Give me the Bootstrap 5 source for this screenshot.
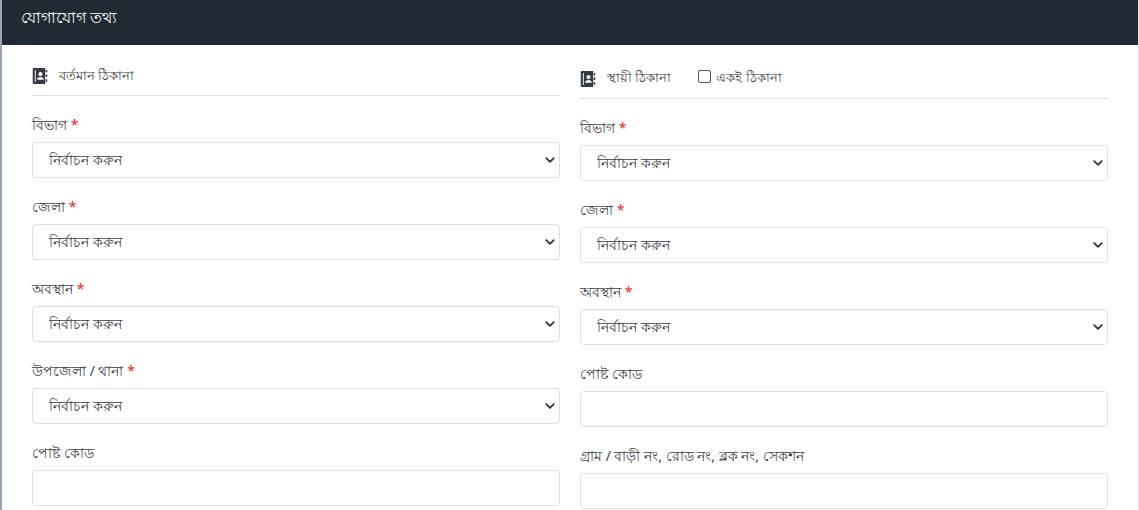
<!DOCTYPE html>
<html lang="bn">
<head>
  <meta charset="UTF-8">
  <title>যোগাযোগ তথ্য</title>
  <meta name="viewport" content="width=device-width, initial-scale=1">
  <link href="https://cdn.jsdelivr.net/npm/bootstrap@5.3.0/dist/css/bootstrap.min.css" rel="stylesheet">
  <script src="https://cdn.jsdelivr.net/npm/bootstrap@5.3.0/dist/js/bootstrap.bundle.min.js"></script>
  <style>
    html, body { height: 510px; overflow: hidden; }
    body { font-family: "Noto Sans", "Liberation Sans", sans-serif; font-size: 14px; color: #3c4043; background: #fff; }
    .info-card { border: 0; border-left: 2px solid #9aa5b1; border-right: 1px solid #dee2e6; border-radius: 0; }
    .info-head { background: #212934; color: #fff; height: 45px; padding: 6px 19px 0; font-size: 15.7px; line-height: 22px; }
    .info-body { padding: 0 29px 0 30px; }
    .info-row { display: grid; grid-template-columns: 528px 528px; column-gap: 20px; }
    .sec-title { height: 51px; padding-top: 20px; border-bottom: 1px solid #dee2e6; margin-bottom: 18px; font-size: 13px; line-height: 20px; }
    .sec-title-r { margin-top: 3px; }
    .sec-title-r > span { margin-top: -1px; }
    .sec-title svg { width: 16px; height: 16px; margin: 3px 11px 0 0; flex: none; }
    .same-addr { margin-left: 27px; }
    .same-addr .form-check-input { width: 13px; height: 13px; margin: 0 5px 2px 0; border-color: #555; border-radius: 2px; }
    .fld { margin-bottom: 18px; }
    .fld label { display: block; font-size: 14px; line-height: 20px; padding-top: 1px; margin-bottom: 7px; }
    .req { color: #f01c24; }
    .fld .form-select, .fld .form-control { height: 36px; font-size: 14px; line-height: 20px; padding: 6px 16px; color: #3c4043; border-color: #dcdfe2; border-radius: 4px; }
    .fld .form-select { background-image: url("data:image/svg+xml,%3csvg xmlns='http://www.w3.org/2000/svg' viewBox='0 0 16 16'%3e%3cpath fill='none' stroke='%23343a40' stroke-linecap='round' stroke-linejoin='round' stroke-width='3' d='m2 5 6 6 6-6'/%3e%3c/svg%3e"); background-size: 10px 10px; background-position: right 4px center; }
  </style>
</head>
<body>

<div class="card info-card">
  <div class="info-head">যোগাযোগ তথ্য</div>
  <div class="info-body">
    <div class="info-row">

      <div>
        <div class="sec-title d-flex align-items-start">
          <svg viewBox="0 0 16 17"><use href="#book"/></svg>
          <span>বর্তমান ঠিকানা</span>
        </div>
        <div class="fld">
          <label>বিভাগ <span class="req">*</span></label>
          <select class="form-select"><option>নির্বাচন করুন</option></select>
        </div>
        <div class="fld">
          <label>জেলা <span class="req">*</span></label>
          <select class="form-select"><option>নির্বাচন করুন</option></select>
        </div>
        <div class="fld">
          <label>অবস্থান <span class="req">*</span></label>
          <select class="form-select"><option>নির্বাচন করুন</option></select>
        </div>
        <div class="fld">
          <label>উপজেলা / থানা <span class="req">*</span></label>
          <select class="form-select"><option>নির্বাচন করুন</option></select>
        </div>
        <div class="fld">
          <label>পোষ্ট কোড</label>
          <input type="text" class="form-control">
        </div>
      </div>

      <div>
        <div class="sec-title sec-title-r d-flex align-items-start">
          <svg viewBox="0 0 16 17">
            <symbol id="book" viewBox="0 0 16 17">
              <path fill="#343a40" d="M1.5 0H13.5v17H1.5A1.5 1.5 0 0 1 0 15.5v-14A1.5 1.5 0 0 1 1.5 0z"/>
              <path fill="#fff" d="M2.5 2h1v13h-1z"/>
              <circle cx="8.5" cy="6.5" r="2.2" fill="#fff"/>
              <path fill="#fff" d="M5 12.5c0-2.2 1.5-3 3.5-3s3.5.8 3.5 3z"/>
              <path fill="#343a40" d="M14 2h2v2.5h-2zM14 7h2v2.5h-2zM14 12h2v2.5h-2z"/>
            </symbol>
            <use href="#book"/>
          </svg>
          <span>স্থায়ী ঠিকানা</span>
          <span class="same-addr d-flex align-items-center">
            <input class="form-check-input" type="checkbox" id="sameAddr">
            <label for="sameAddr">একই ঠিকানা</label>
          </span>
        </div>
        <div class="fld">
          <label>বিভাগ <span class="req">*</span></label>
          <select class="form-select"><option>নির্বাচন করুন</option></select>
        </div>
        <div class="fld">
          <label>জেলা <span class="req">*</span></label>
          <select class="form-select"><option>নির্বাচন করুন</option></select>
        </div>
        <div class="fld">
          <label>অবস্থান <span class="req">*</span></label>
          <select class="form-select"><option>নির্বাচন করুন</option></select>
        </div>
        <div class="fld">
          <label>পোষ্ট কোড</label>
          <input type="text" class="form-control">
        </div>
        <div class="fld">
          <label>গ্রাম / বাড়ী নং, রোড নং, ব্লক নং, সেকশন</label>
          <input type="text" class="form-control">
        </div>
      </div>

    </div>
  </div>
</div>

</body>
</html>
